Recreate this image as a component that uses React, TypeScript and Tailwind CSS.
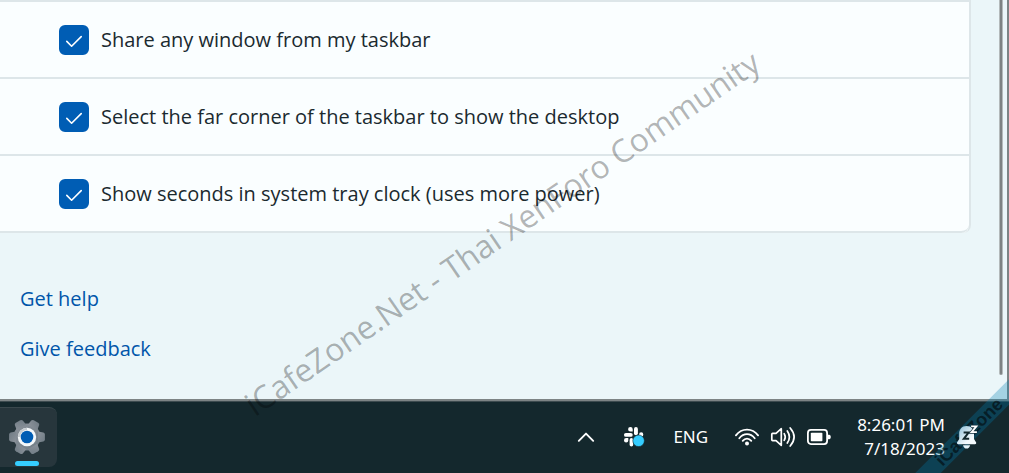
import React from "react";

const options = [
  "Share any window from my taskbar",
  "Select the far corner of the taskbar to show the desktop",
  "Show seconds in system tray clock (uses more power)",
];

function OptionRow({ id, label }: { id: string; label: string }) {
  return (
    <li className="flex h-[77px] items-center gap-3 border-b-2 border-[#dde6e9] pl-[59px]">
      <span className="grid size-[30px] shrink-0 place-items-center">
        <input
          id={id}
          type="checkbox"
          defaultChecked
          className="peer col-start-1 row-start-1 size-[30px] appearance-none rounded-md border-2 border-[#8a8f91] bg-white checked:border-[#005db4] checked:bg-[#005db4]"
        />
        <svg
          viewBox="0 0 30 30"
          className="pointer-events-none invisible col-start-1 row-start-1 size-[30px] peer-checked:visible"
          fill="none"
          stroke="#fff"
          strokeWidth="1.6"
          strokeLinecap="round"
          strokeLinejoin="round"
          aria-hidden="true"
        >
          <path d="M7.8 16.4 12.6 21.2 22.2 11.6" />
        </svg>
      </span>
      <label htmlFor={id} className="text-xl leading-7 text-[#1b2a2f]">
        {label}
      </label>
    </li>
  );
}

function SettingsIcon() {
  return (
    <svg viewBox="0 0 38 38" className="size-[38px]" aria-hidden="true">
      <defs>
        <linearGradient id="gear" x1="0" y1="0" x2="1" y2="1">
          <stop offset="0" stopColor="#8b929a" />
          <stop offset="1" stopColor="#6f7b84" />
        </linearGradient>
      </defs>
      <g fill="url(#gear)">
        <circle cx="19" cy="19" r="13.4" />
        {[0, 60, 120, 180, 240, 300].map((angle) => (
          <path
            key={angle}
            transform={`rotate(${angle} 19 19)`}
            d="M30 13.5 35.4 14.4Q36.9 14.8 36.9 16.5V21.5Q36.9 23.2 35.4 23.6L30 24.5Z"
          />
        ))}
      </g>
      <circle cx="19" cy="19" r="9.2" fill="#f4f8fa" />
      <path d="M19 9.8A9.2 9.2 0 0 0 9.8 19H12A7 7 0 0 1 19 12Z" fill="#c6ccd0" />
      <circle cx="19" cy="19" r="6.3" fill="#005db4" />
    </svg>
  );
}

function SlackIcon() {
  return (
    <svg viewBox="0 0 22 22" className="size-[22px]" aria-hidden="true">
      <g fill="#fff">
        <path d="M7.4 1A2.3 2.3 0 0 0 7.4 5.6H9.7V3.3A2.3 2.3 0 0 0 7.4 1Z" />
        <rect x="11" y="1" width="3.9" height="8.2" rx="1.9" />
        <rect x="1" y="6.9" width="8.7" height="3.9" rx="1.9" />
        <path d="M20.3 8.4A2.1 2.1 0 0 0 16.1 8.4V10.8H18.2A2.2 2.2 0 0 0 20.3 8.4Z" />
        <path d="M1 14.4A2.1 2.1 0 0 0 5.3 14.4V12.1H3.2A2.2 2.2 0 0 0 1 14.4Z" />
        <rect x="6.6" y="12.1" width="3.6" height="8.5" rx="1.8" />
      </g>
      <circle cx="15.6" cy="14.8" r="5.8" fill="#35cdff" stroke="#14282d" strokeWidth="0.6" />
    </svg>
  );
}

function WifiIcon() {
  return (
    <svg viewBox="0 0 26 22" className="h-[22px] w-[26px]" fill="none" stroke="#fff" strokeWidth="1.8" strokeLinecap="round" aria-hidden="true">
      <path d="M1.9 9.4C7.8 1.8 18.2 1.8 24.1 9.4" />
      <path d="M5.3 12.3C9.6 6.8 16.4 6.8 20.7 12.3" />
      <path d="M8.7 14.9C11.2 11.8 14.8 11.8 17.3 14.9" />
      <circle cx="13" cy="17.4" r="2" fill="#fff" stroke="none" />
    </svg>
  );
}

function VolumeIcon() {
  return (
    <svg viewBox="0 0 26 22" className="h-[22px] w-[26px]" fill="none" stroke="#fff" strokeWidth="1.7" strokeLinecap="round" strokeLinejoin="round" aria-hidden="true">
      <path d="M1.8 8.2Q1.8 7.4 2.6 7.4H6L11.3 2.7V19.3L6 14.6H2.6Q1.8 14.6 1.8 13.8Z" />
      <path d="M14.2 7.6Q16.3 11 14.2 14.4" />
      <path d="M17.3 4.9Q21.5 11 17.3 17.1" />
      <path d="M20.2 2Q28 11 20.2 20" />
    </svg>
  );
}

function BatteryIcon() {
  return (
    <svg viewBox="0 0 26 22" className="h-[22px] w-[26px]" aria-hidden="true">
      <rect x="1.9" y="3.9" width="19.2" height="14.2" rx="3" fill="none" stroke="#fff" strokeWidth="1.8" />
      <rect x="4.8" y="6.8" width="11.6" height="8.4" rx="0.8" fill="#fff" />
      <path d="M22 8.8H23.4Q24.8 9.2 24.8 11T23.4 13.2H22Z" fill="#fff" />
    </svg>
  );
}

function BellIcon() {
  return (
    <svg viewBox="0 0 24 26" className="h-[26px] w-6" aria-hidden="true">
      <defs>
        <linearGradient id="bell" x1="0" y1="0" x2="1" y2="1">
          <stop offset="0.2" stopColor="#a9cde0" />
          <stop offset="0.7" stopColor="#f4fafd" />
        </linearGradient>
      </defs>
      <path d="M10.6 2C5.8 2 3.2 5.6 3.2 9.6V15L1 18.6Q.7 20.2 2.2 20.2H19Q20.6 20.2 20.2 18.6L18 15V9.6C18 5.6 15.4 2 10.6 2Z" fill="url(#bell)" />
      <path d="M7 21.2H14.2Q13.2 24.6 10.6 24.6T7 21.2Z" fill="#e6f3f9" />
      <path d="M7.6 8.6H12.6L7.8 14.8H13.2" fill="none" stroke="#14282d" strokeWidth="2" />
      <path d="M15.1 2.4H20.4L15.6 8.2H20.9" fill="none" stroke="#14303c" strokeWidth="3.2" />
      <path d="M15.1 2.4H20.4L15.6 8.2H20.9" fill="none" stroke="#fff" strokeWidth="1.8" />
    </svg>
  );
}

export default function App() {
  return (
    <div className="relative flex min-h-screen flex-col overflow-hidden bg-[#14282d] font-['Open_Sans','Noto_Sans',sans-serif]">
      <main className="flex border-r-2 border-b-2 border-[#7d8485] bg-[#ebf6f9]">
        <div className="min-w-0 flex-1">
          <ul className="mr-[28px] rounded-br-lg border-t-2 border-r-2 border-[#dde6e9] bg-[#fafeff] [&>li:last-child]:rounded-br-lg">
            {options.map((label, index) => (
              <OptionRow key={label} id={`option-${index}`} label={label} />
            ))}
          </ul>
          <nav className="flex flex-col items-start gap-[22px] px-5 pt-[52px] pb-9 text-xl leading-7 text-[#0055aa]">
            <a href="#help">Get help</a>
            <a href="#feedback">Give feedback</a>
          </nav>
        </div>
        <div className="mr-1 mb-6 w-1 rounded-b-full border-r border-l border-[#b4babb] bg-[#7d8283]" />
      </main>

      <footer className="flex flex-1 items-start justify-between border-t border-[#3d4b4f]">
        <button aria-label="Settings" className="mt-[5px] flex h-[60px] w-[57px] flex-col items-center justify-between rounded-r-lg border-t border-[#3a484d] bg-[#27363c] pt-[10px] pr-1 pb-px">
          <SettingsIcon />
          <span className="h-[5px] w-6 shrink-0 rounded-full bg-[#35cdff]" />
        </button>

        <div className="flex h-[70px] items-center pr-[29px] text-white">
          <button aria-label="Show hidden icons" className="mr-7">
            <svg viewBox="0 0 18 12" className="h-3 w-[18px]" fill="none" stroke="#fff" strokeWidth="1.9" strokeLinecap="round" strokeLinejoin="round" aria-hidden="true">
              <path d="M1.8 9.8 9 2.6 16.2 9.8" />
            </svg>
          </button>
          <button aria-label="Slack" className="mr-7">
            <SlackIcon />
          </button>
          <button className="mr-[26px] font-['Noto_Sans',sans-serif] text-[17px] leading-6">ENG</button>
          <button aria-label="Network, volume and battery" className="mr-[25px] flex gap-[10px]">
            <WifiIcon />
            <VolumeIcon />
            <BatteryIcon />
          </button>
          <button className="mr-[11px] text-right font-['Noto_Sans',sans-serif] text-[17px] leading-6">
            <span className="block">8:26:01 PM</span>
            <span className="block">7/18/2023</span>
          </button>
          <button aria-label="Notifications" className="relative z-10">
            <BellIcon />
          </button>
        </div>
      </footer>

      <div className="pointer-events-none absolute top-[233px] left-[502px] -translate-x-1/2 -translate-y-1/2 -rotate-[34.5deg] text-[32px] whitespace-nowrap text-black/30">
        iCafeZone.Net - Thai XenForo Community
      </div>
      <div className="pointer-events-none absolute -right-[60px] bottom-8 flex h-[18px] w-[200px] -rotate-45 items-center justify-center bg-[#007daf]/30 font-['Liberation_Sans',sans-serif] text-lg leading-none font-bold text-black/55">
        iCafeZone
      </div>
    </div>
  );
}
